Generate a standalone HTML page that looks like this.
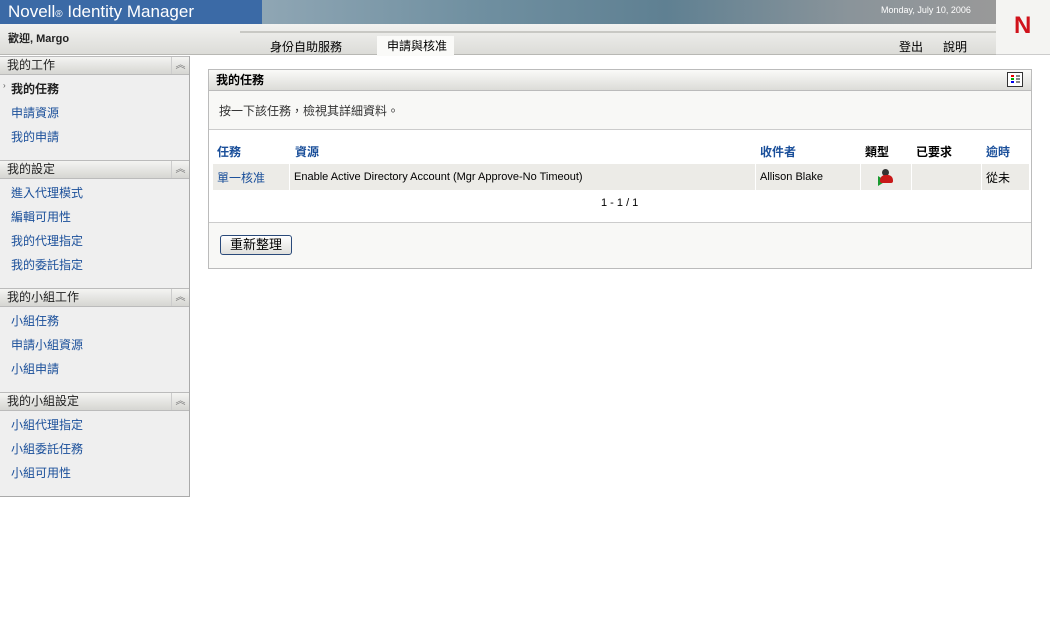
<!DOCTYPE html>
<html><head><meta charset="utf-8"><style>
*{margin:0;padding:0;box-sizing:border-box}
body{width:1050px;height:627px;background:#fff;font-family:"Liberation Sans","Noto Sans CJK TC",sans-serif;font-size:12px;color:#000;position:relative;overflow:hidden}
.abs{position:absolute}
.sh{position:absolute;left:0;width:189px;height:19px;background:linear-gradient(#f4f4f2,#d6d6d2);border-top:1px solid #bbb;border-bottom:1px solid #bbb;font-size:12px;line-height:17px;padding-left:7px;color:#222}
.sh .c{position:absolute;right:0;top:0;width:18px;height:17px;border-left:1px solid #ccc;text-align:center;color:#777;font-size:10px}
.it{position:absolute;left:11px;font-size:12px;color:#1a4f9a}
</style></head><body>
<div class="abs" style="left:0;top:0;width:262px;height:24px;background:#3b6aa6"></div>
<div class="abs" style="left:8px;top:1px;color:#fff;font-size:17px;line-height:22px">Novell<span style="font-size:10px">®</span> Identity Manager</div>
<div class="abs" style="left:262px;top:0;width:734px;height:24px;background:linear-gradient(90deg,#8fa6b4,#6f8fa0 30%,#5f8092 55%,#8a949a 80%,#999 100%)"></div>
<div class="abs" style="left:881px;top:5px;color:#fff;font-size:9px">Monday, July 10, 2006</div>
<div class="abs" style="left:0;top:24px;width:996px;height:31px;background:linear-gradient(#f2f2f0,#dcdcd8);border-bottom:1px solid #b8b8b4"></div>
<div class="abs" style="left:8px;top:30px;font-size:11px;font-weight:bold;color:#222">歡迎, Margo</div>
<div class="abs" style="left:240px;top:31px;width:756px;height:2px;background:#c8c8c4"></div>
<div class="abs" style="left:270px;top:38px;font-size:12px">身份自助服務</div>
<div class="abs" style="left:377px;top:36px;width:77px;height:20px;background:#fafaf8"></div>
<div class="abs" style="left:387px;top:37px;font-size:12px">申請與核准</div>
<div class="abs" style="left:899px;top:38px;font-size:12px">登出</div>
<div class="abs" style="left:943px;top:38px;font-size:12px">說明</div>
<div class="abs" style="left:996px;top:0;width:54px;height:55px;background:#f4f4f2;border-bottom:1px solid #ccc"></div>
<div class="abs" style="left:1014px;top:12px;color:#d0121b;font-size:24px;font-weight:bold;line-height:28px">N</div>
<div class="abs" style="left:0;top:56px;width:190px;height:441px;background:#efefef;border-right:1px solid #aaa;border-bottom:1px solid #aaa"></div>
<div class="sh" style="top:56px">我的工作<span class="c">︽</span></div>
<div class="abs" style="left:3px;top:81px;font-size:8px;color:#555">›</div>
<div class="it" style="top:80px;color:#222;font-weight:bold">我的任務</div>
<div class="it" style="top:104px">申請資源</div>
<div class="it" style="top:128px">我的申請</div>
<div class="sh" style="top:160px">我的設定<span class="c">︽</span></div>
<div class="it" style="top:184px">進入代理模式</div>
<div class="it" style="top:208px">編輯可用性</div>
<div class="it" style="top:232px">我的代理指定</div>
<div class="it" style="top:256px">我的委託指定</div>
<div class="sh" style="top:288px">我的小組工作<span class="c">︽</span></div>
<div class="it" style="top:312px">小組任務</div>
<div class="it" style="top:336px">申請小組資源</div>
<div class="it" style="top:360px">小組申請</div>
<div class="sh" style="top:392px">我的小組設定<span class="c">︽</span></div>
<div class="it" style="top:416px">小組代理指定</div>
<div class="it" style="top:440px">小組委託任務</div>
<div class="it" style="top:464px">小組可用性</div>
<div class="abs" style="left:208px;top:69px;width:824px;height:200px;border:1px solid #bbb;background:#f8f8f6"></div>
<div class="abs" style="left:209px;top:70px;width:822px;height:21px;background:linear-gradient(#fafaf8,#dcdcd8);border-bottom:1px solid #bbb"></div>
<div class="abs" style="left:216px;top:71px;font-size:12px;font-weight:bold">我的任務</div>
<div class="abs" style="left:1007px;top:72px;width:16px;height:15px;border:1px solid #333;background:#fff"></div>
<div class="abs" style="left:1011px;top:75px;width:3px;height:2px;background:#e00;box-shadow:0 3px 0 #0a0,0 6px 0 #00e"></div>
<div class="abs" style="left:1016px;top:75px;width:4px;height:2px;background:#888;box-shadow:0 3px 0 #888,0 6px 0 #888"></div>
<div class="abs" style="left:219px;top:102px;font-size:12px;color:#333">按一下該任務，檢視其詳細資料。</div>
<div class="abs" style="left:209px;top:129px;width:822px;height:94px;background:#fff;border-top:1px solid #ccc;border-bottom:1px solid #ccc"></div>
<div class="abs" style="left:217px;top:143px;font-weight:bold;color:#1a4f9a">任務</div>
<div class="abs" style="left:295px;top:143px;font-weight:bold;color:#1a4f9a">資源</div>
<div class="abs" style="left:760px;top:143px;font-weight:bold;color:#1a4f9a">收件者</div>
<div class="abs" style="left:865px;top:143px;font-weight:bold">類型</div>
<div class="abs" style="left:916px;top:143px;font-weight:bold">已要求</div>
<div class="abs" style="left:986px;top:143px;font-weight:bold;color:#1a4f9a">逾時</div>
<div class="abs" style="left:213px;top:164px;width:816px;height:26px;background:#ecebe7"></div>
<div class="abs" style="left:289px;top:164px;width:1px;height:26px;background:#fff"></div>
<div class="abs" style="left:755px;top:164px;width:1px;height:26px;background:#fff"></div>
<div class="abs" style="left:860px;top:164px;width:1px;height:26px;background:#fff"></div>
<div class="abs" style="left:911px;top:164px;width:1px;height:26px;background:#fff"></div>
<div class="abs" style="left:981px;top:164px;width:1px;height:26px;background:#fff"></div>
<div class="abs" style="left:217px;top:169px;color:#1a4f9a">單一核准</div>
<div class="abs" style="left:294px;top:171px;font-size:11px">Enable Active Directory Account (Mgr Approve-No Timeout)</div>
<div class="abs" style="left:760px;top:171px;font-size:11px">Allison Blake</div>
<div class="abs" style="left:878px;top:176px;width:0;height:0;border-top:5px solid transparent;border-bottom:5px solid transparent;border-left:8px solid #1a9a30"></div>
<div class="abs" style="left:882px;top:169px;width:7px;height:7px;border-radius:50%;background:#333"></div>
<div class="abs" style="left:880px;top:175px;width:13px;height:8px;border-radius:5px 5px 2px 2px;background:#c81818"></div>
<div class="abs" style="left:986px;top:169px">從未</div>
<div class="abs" style="left:601px;top:197px;font-size:11px">1 - 1 / 1</div>
<div class="abs" style="left:220px;top:235px;width:72px;height:20px;border:1px solid #2a4a7a;border-radius:3px;background:linear-gradient(#fff,#e0e0dc);text-align:center;line-height:17px;font-size:13px">重新整理</div>
</body></html>
